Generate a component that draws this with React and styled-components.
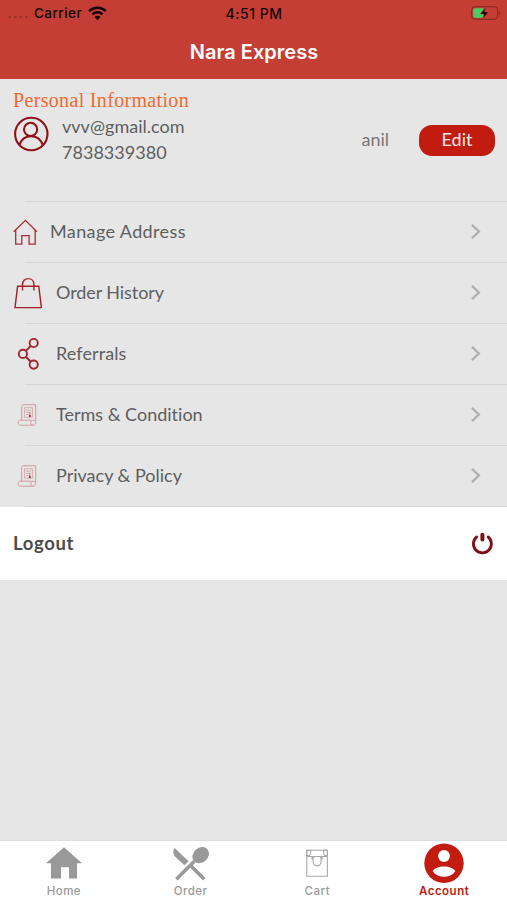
import React from 'react';
import styled, { createGlobalStyle } from 'styled-components';

const color = {
  header: '#c43e35',
  red: '#c21b10',
  maroon: '#8f1117',
  page: '#e6e6e6',
  line: '#d5d5d5',
  text: '#5e5e5e',
  muted: '#999',
};

const GlobalStyle = createGlobalStyle`
  * {
    box-sizing: border-box;
  }

  body {
    margin: 0;
    background: ${color.page};
  }
`;

const Screen = styled.div`
  display: flex;
  flex-direction: column;
  width: 507px;
  height: 900px;
  overflow: hidden;
  background: ${color.page};
  color: ${color.text};
  font-family: Lato, 'Liberation Sans', sans-serif;
  font-variant-ligatures: none;
  white-space: nowrap;

  svg {
    display: block;
    flex: none;
  }
`;

const Header = styled.header`
  height: 79px;
  background: ${color.header};
  font-family: Inter, 'Liberation Sans', sans-serif;
`;

const StatusBar = styled.div`
  display: grid;
  grid-template-columns: 1fr auto 1fr;
  align-items: center;
  height: 26px;
  padding: 0 6px 0 8px;
  color: #160504;
  font-size: 13.5px;
  font-weight: 500;
`;

const Carrier = styled.div`
  display: flex;
  align-items: center;
  gap: 6px;
  letter-spacing: 0.45px;
`;

const Clock = styled.span`
  margin-right: 1px;
  font-size: 14px;
  letter-spacing: 0.5px;
`;

const Battery = styled.div`
  justify-self: end;
`;

const Title = styled.h1`
  margin: 0;
  padding-left: 1px;
  color: #fff;
  font-size: 20px;
  font-weight: 600;
  line-height: 53px;
  letter-spacing: 0.02px;
  text-align: center;
`;

const Profile = styled.section`
  height: 122px;
  padding: 10px 12px 0 13px;
`;

const SectionTitle = styled.h2`
  margin: 0;
  color: #f26a30;
  font-family: 'Liberation Serif', serif;
  font-size: 20px;
  font-weight: 400;
  line-height: 23px;
  letter-spacing: 0.33px;
`;

const ProfileRow = styled.div`
  display: flex;
  align-items: flex-start;
`;

const Contact = styled.div`
  flex: 1;
  margin: 1px 0 0 13px;
  font-size: 18px;
  line-height: 26px;
`;

const Line = styled.div`
  letter-spacing: 0.02px;
`;

const UserName = styled.span`
  margin: 16px 30px 0 0;
  color: #777;
  font-size: 18px;
  line-height: 22px;
`;

const EditButton = styled.button`
  width: 76px;
  height: 31px;
  margin-top: 13px;
  padding: 0 0 2px;
  border: 0;
  border-radius: 13px;
  background: ${color.red};
  color: #fbe9e7;
  font: 18px/29px Lato, 'Liberation Sans', sans-serif;
`;

const Menu = styled.ul`
  margin: 0;
  padding: 0 0 1px;
  list-style: none;
  background: linear-gradient(90deg, transparent 25px, ${color.line} 25px)
    bottom / 100% 1px no-repeat;
`;

const MenuItem = styled.li`
  display: flex;
  align-items: center;
  height: 61px;
  padding: 0 26px 0 13px;
  background: linear-gradient(${color.line}, ${color.line}) 25px 0 / 100% 1px
    no-repeat;
`;

const MenuLabel = styled.span`
  flex: 1;
  margin-left: ${({ $gap }) => $gap}px;
  padding-bottom: 2px;
  font-size: 18px;
  line-height: 24px;
  letter-spacing: ${({ $spacing }) => $spacing}px;
`;

const LogoutRow = styled.div`
  display: flex;
  align-items: center;
  justify-content: space-between;
  height: 73px;
  padding: 0 13px 2px;
  background: #fff;
  color: #4c4c4c;
  font-size: 18.5px;
  font-weight: 700;
  letter-spacing: 0.65px;
`;

const TabBar = styled.nav`
  display: grid;
  grid-template-columns: repeat(4, 1fr);
  height: 60px;
  margin-top: auto;
  border-top: 1px solid #dcdcdc;
  background: #fff;
`;

const Tab = styled.div`
  display: flex;
  flex-direction: column;
  align-items: center;
  padding-left: 1px;
  color: ${({ $active }) => ($active ? color.red : color.muted)};
  font-family: Inter, 'Liberation Sans', sans-serif;
  font-size: 11.5px;
  font-weight: ${({ $active }) => ($active ? 600 : 500)};
  line-height: 14px;
  letter-spacing: 0.5px;

  svg {
    margin: 2px 0 1px;
  }
`;

const WifiIcon = () => (
  <svg width="19" height="15" viewBox="0 0 19 15" fill="none" stroke="#160504">
    <path d="M1.2 5.1a12 12 0 0 1 16.6 0" strokeWidth="2.7" />
    <path d="M4.4 8.3a7.4 7.4 0 0 1 10.2 0" strokeWidth="2.5" />
    <path d="M9.5 14.2 6.5 11a4.2 4.2 0 0 1 6 0z" fill="#160504" stroke="none" />
  </svg>
);

const BatteryIcon = () => (
  <svg width="30" height="14" viewBox="0 0 30 14">
    <rect x="0.7" y="0.7" width="26" height="12.6" rx="3.4" fill="none" stroke="#7f2923" />
    <path d="M4 2.2h8.5v9.6H4a1.8 1.8 0 0 1-1.8-1.8V4A1.8 1.8 0 0 1 4 2.2z" fill="#4ccb64" />
    <path d="M28 4.8c1.6.5 1.6 3.9 0 4.4z" fill="#7f2923" />
    <path d="M14.8 1.6 9.2 8h4l-1.4 4.7 5.5-6.6h-4z" fill="#120504" stroke={color.header} strokeWidth="0.4" />
  </svg>
);

const UserIcon = () => (
  <svg width="36" height="40" viewBox="0 0 36 40" fill="none" stroke={color.maroon} strokeWidth="2.1">
    <circle cx="18.3" cy="22" r="16.2" />
    <circle cx="17.6" cy="17.4" r="6.6" />
    <path d="M6.4 33.1c2-5.6 6.4-8.8 11.6-8.8s9.8 3.2 11.8 8.8" />
  </svg>
);

const HouseIcon = () => (
  <svg width="25" height="28" viewBox="0 0 25 28" fill="none" stroke="#a92b38" strokeWidth="1.3">
    <path d="M.7 13.8 12.4 2.3l11.5 11.5" />
    <path d="M2.7 12.2v13.9h6.1v-8.5h7.3v8.5h6.1V12.2" />
  </svg>
);

const BagIcon = () => (
  <svg width="30" height="32" viewBox="0 0 30 32" fill="none" stroke="#a52029" strokeWidth="1.4">
    <path d="M4.6 9.3h21.2l2.6 21.3H2z" />
    <path d="M9.5 13.5V7.5c0-7.8 11.4-7.8 11.4 0v6" />
  </svg>
);

const ShareIcon = () => (
  <svg width="30" height="34" viewBox="0 0 30 34" fill="none" stroke="#a32630" strokeWidth="1.9">
    <circle cx="20.7" cy="6" r="4.1" />
    <circle cx="9.9" cy="16.9" r="4.1" />
    <circle cx="20.7" cy="27.6" r="4.1" />
    <path d="m12.8 13.9 5-4.9M12.8 19.8l5 4.9" />
  </svg>
);

const ScrollIcon = () => (
  <svg width="30" height="24" viewBox="0 0 30 24" fill="none" stroke="#d39aa0" strokeWidth="1">
    <path d="M8.7 17.2V3.7c0-1.2.7-2 1.8-2h12.2v16.5" />
    <path d="M18.3 17.2H7.2c-2.8 0-2.8 5 0 5h12.7c3.7 0 3.7-5 .3-5s-3.2 5 0 5" />
    <path d="M11.6 4.7h7.8v9.5h-7.8zM13 7.1h5M13 9.3h3M13 11.5h2.5" strokeWidth="0.8" />
    <path d="M16.8 8.7v4.2" stroke="#c9848c" strokeWidth="1.2" />
    <circle cx="16.8" cy="13.1" r="1" fill="#94182a" stroke="none" />
  </svg>
);

const Chevron = () => (
  <svg width="10" height="16" viewBox="0 0 10 16" fill="none" stroke="#b0b0b0" strokeWidth="2.3">
    <path d="M1 .9 7.9 7.5 1 14.1" />
  </svg>
);

const PowerIcon = () => (
  <svg width="23" height="24" viewBox="0 0 23 24" fill="none" stroke="#7d1015" strokeLinecap="round">
    <path d="M5.7 5.9a9 9 0 1 0 11.4 0" strokeWidth="2.8" />
    <path d="M11.4 3.8v4.7" strokeWidth="4" />
  </svg>
);

const HomeTabIcon = () => (
  <svg width="38" height="40" viewBox="0 0 38 40" fill={color.muted}>
    <path d="M19 4.2 37 20.2H32v15.2h-8V24.2h-8v11.2H6V20.2H1z" />
  </svg>
);

const OrderTabIcon = () => (
  <svg width="38" height="40" viewBox="0 0 38 40" fill={color.muted}>
    <path d="M2.7 5 16.6 18.3l-4.2 4L3.4 14C.9 11.4.6 8 2.7 5z" />
    <path d="m4.3 36.3 18-18M18.3 22.2l14 14.1" stroke={color.muted} strokeWidth="3.5" fill="none" />
    <ellipse cx="28.7" cy="12.2" rx="7.3" ry="9" transform="rotate(48 28.7 12.2)" />
  </svg>
);

const CartTabIcon = () => (
  <svg width="38" height="40" viewBox="0 0 38 40" fill="none" stroke="#a9a9a9" strokeWidth="1.1">
    <path d="M8.8 13.5h20.6v19.8H8.8zM8.8 13.5V7.3h20.6v6.2" />
    <path d="M8.8 7.3h3.8c.6 2 0 4-1.2 5.3H8.8zM29.4 7.3h-3.8c-.6 2 0 4 1.2 5.3h2.6z" />
    <path d="M15.1 13.8v4.3c0 6.4 8 6.4 8 0v-4.3M14 16.4v-2.1h2.2M24.2 16.4v-2.1H22" />
  </svg>
);

const AccountTabIcon = () => (
  <svg width="40" height="40" viewBox="0 0 40 40">
    <circle cx="20" cy="20.3" r="19.7" fill={color.red} />
    <circle cx="20" cy="13" r="5.9" fill="#fff" />
    <path d="M8.7 28.2c2.8-6.4 19.8-6.4 22.6 0-5.2 7.5-17.4 7.5-22.6 0z" fill="#fff" />
  </svg>
);

const menu = [
  { label: 'Manage Address', icon: HouseIcon, gap: 12, spacing: 0.38 },
  { label: 'Order History', icon: BagIcon, gap: 13, spacing: -0.08 },
  { label: 'Referrals', icon: ShareIcon, gap: 13, spacing: 0.1 },
  { label: 'Terms & Condition', icon: ScrollIcon, gap: 13, spacing: 0 },
  { label: 'Privacy & Policy', icon: ScrollIcon, gap: 13, spacing: 0 },
];

const tabs = [
  { label: 'Home', icon: HomeTabIcon },
  { label: 'Order', icon: OrderTabIcon },
  { label: 'Cart', icon: CartTabIcon },
  { label: 'Account', icon: AccountTabIcon, active: true },
];

const SignalDots = () => (
  <svg width="20" height="14" viewBox="0 0 20 14" fill="#992f29">
    {[1.8, 7.3, 12.8, 18.3].map(x => (
      <circle key={x} cx={x} cy="11" r="1.3" />
    ))}
  </svg>
);

const App = () => (
  <>
    <GlobalStyle />
    <Screen>
      <Header>
        <StatusBar>
          <Carrier>
            <SignalDots />
            Carrier
            <WifiIcon />
          </Carrier>
          <Clock>4:51 PM</Clock>
          <Battery>
            <BatteryIcon />
          </Battery>
        </StatusBar>
        <Title>Nara Express</Title>
      </Header>
      <Profile>
        <SectionTitle>Personal Information</SectionTitle>
        <ProfileRow>
          <UserIcon />
          <Contact>
            <Line>vvv@gmail.com</Line>
            <Line>7838339380</Line>
          </Contact>
          <UserName>anil</UserName>
          <EditButton type="button">Edit</EditButton>
        </ProfileRow>
      </Profile>
      <Menu>
        {menu.map(({ label, icon: Icon, gap, spacing }) => (
          <MenuItem key={label}>
            <Icon />
            <MenuLabel $gap={gap} $spacing={spacing}>
              {label}
            </MenuLabel>
            <Chevron />
          </MenuItem>
        ))}
      </Menu>
      <LogoutRow>
        Logout
        <PowerIcon />
      </LogoutRow>
      <TabBar>
        {tabs.map(({ label, icon: Icon, active }) => (
          <Tab key={label} $active={active}>
            <Icon />
            {label}
          </Tab>
        ))}
      </TabBar>
    </Screen>
  </>
);

export default App;
